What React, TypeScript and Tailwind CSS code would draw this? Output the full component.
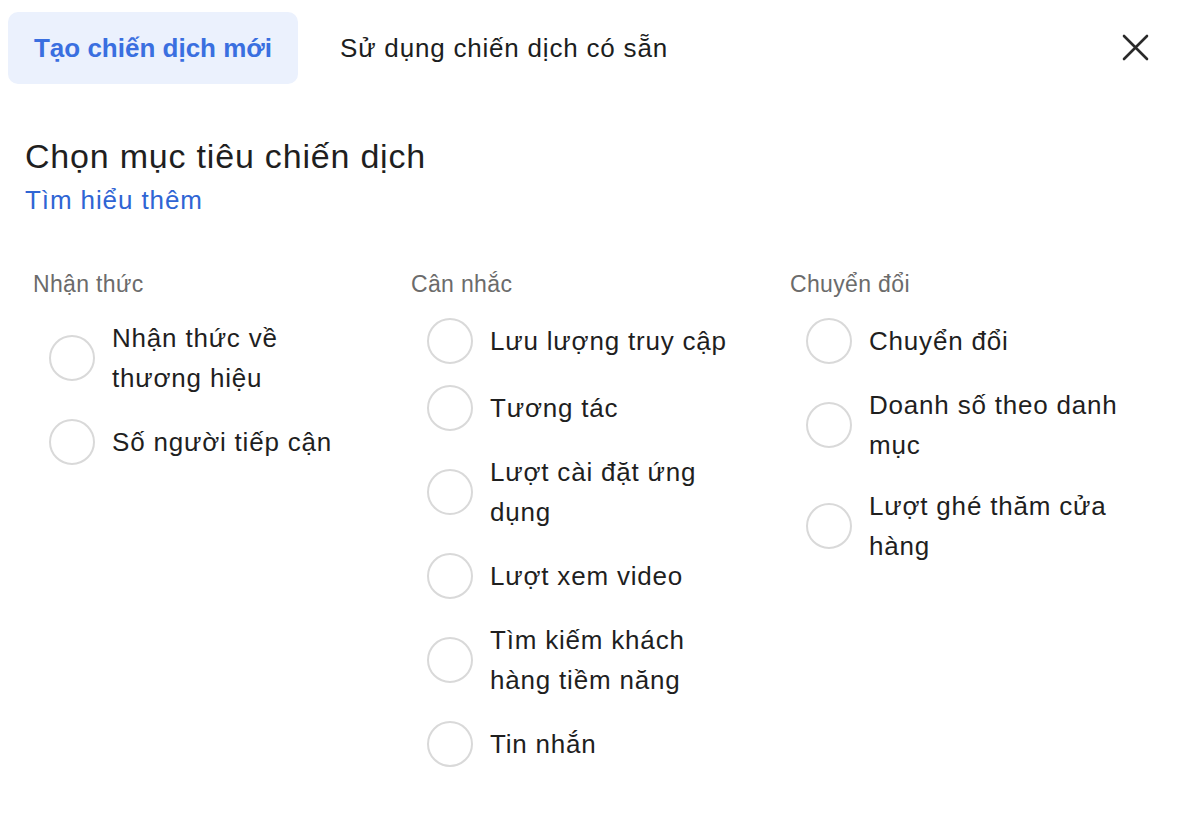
type Column = { title: string; items: string[] };

const columns: Column[] = [
  { title: "Nhận thức", items: ["Nhận thức về thương hiệu", "Số người tiếp cận"] },
  {
    title: "Cân nhắc",
    items: [
      "Lưu lượng truy cập",
      "Tương tác",
      "Lượt cài đặt ứng dụng",
      "Lượt xem video",
      "Tìm kiếm khách hàng tiềm năng",
      "Tin nhắn",
    ],
  },
  {
    title: "Chuyển đổi",
    items: ["Chuyển đổi", "Doanh số theo danh mục", "Lượt ghé thăm cửa hàng"],
  },
];

export default function App() {
  return (
    <div className="w-[1188px] h-[840px] bg-white font-['Liberation_Sans',Arial,sans-serif] text-[#1c1e21]">
      <div className="flex items-center pl-2 pr-[39px] pt-3">
        <button className="h-[72px] w-[290px] rounded-[10px] bg-[#ebf1fd] text-[26px] font-bold text-[#3a6fe0]">
          Tạo chiến dịch mới
        </button>
        <button className="ml-[18px] h-[72px] px-6 text-[26px] tracking-[0.8px] text-[#1c1e21]">
          Sử dụng chiến dịch có sẵn
        </button>
        <button className="ml-auto text-[#2a2a2a]">
          <svg width="28" height="28" viewBox="0 0 28 28" fill="none" stroke="currentColor" strokeWidth="2.6" strokeLinecap="round">
            <path d="M3 2 L26 25 M26 2 L3 25" />
          </svg>
        </button>
      </div>

      <div className="px-[25px] pt-[50px]">
        <h1 className="text-[34px] leading-[44px] tracking-[0.8px] text-[#1f1f1f]">Chọn mục tiêu chiến dịch</h1>
        <a className="mt-[3px] block text-[26px] leading-[38px] tracking-[0.9px] text-[#2f65d4]">Tìm hiểu thêm</a>
      </div>

      <div className="grid grid-cols-[378px_379px_378px] pl-[33px] pt-[49px]">
        {columns.map((col) => (
          <div key={col.title}>
            <div className="text-[23px] leading-[32px] tracking-[0.35px] text-[#6b6b6b]">{col.title}</div>
            <div className="mt-[18px] flex flex-col gap-[21px] pl-4">
              {col.items.map((item) => (
                <label key={item} className="flex items-center gap-[17px]">
                  <span className="h-[46px] w-[46px] shrink-0 rounded-full border-2 border-[#d9d9d9]" />
                  <span className="w-[252px] text-[26px] leading-[40px] tracking-[0.8px] text-[#1f1f1f]">{item}</span>
                </label>
              ))}
            </div>
          </div>
        ))}
      </div>
    </div>
  );
}
